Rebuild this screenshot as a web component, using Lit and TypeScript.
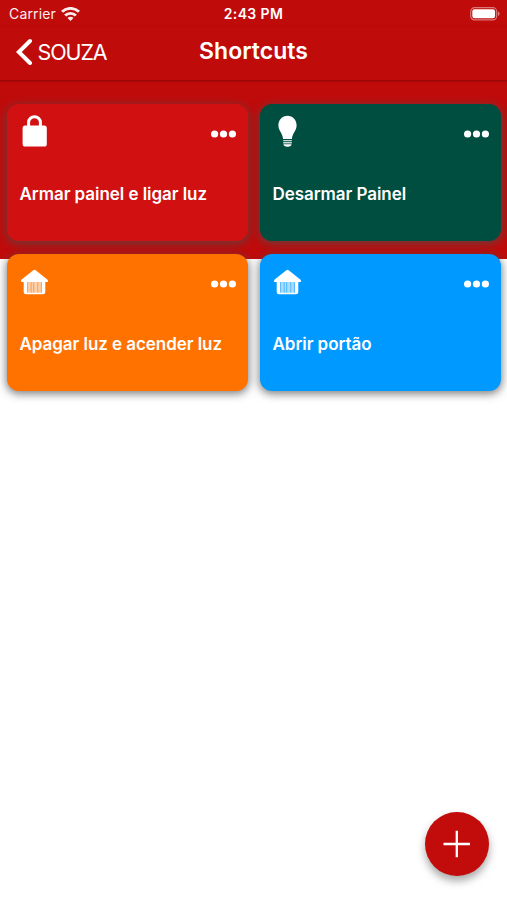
import { LitElement, html, css, svg } from "lit";
import { customElement, property } from "lit/decorators.js";

const lock = svg`
  <path d="M8.600 12V7.300a5.900 5.600 0 0 1 11.800 0V12" fill="none" stroke="#fff" stroke-width="3"/>
  <rect x="2.600" y="10.600" width="24.200" height="20.900" rx="2.600" fill="#fff" stroke="none"/>`;
const bulb = svg`
  <path fill="#fff" d="M14.500 .7C9.400 .7 5.400 4.700 5.400 10.200c0 5.600 4.300 7.800 4.700 13.800h8.800c.4-6 4.700-8.200 4.700-13.800C23.600 4.700 19.600 .7 14.500 .7z"/>
  <path fill="#fff" opacity=".8" d="M10.200 25h8.600v1.300h-8.600zM10.200 27.100h8.600v1.300h-8.600z"/>
  <path fill="#fff" d="M10.400 29.200h8.200c-.2 1.600-1.500 2.500-4.100 2.500s-3.900-.9-4.100-2.500z"/>`;
const garage = svg`
  <path fill="#fff" d="M13.300 4.300q1.200-.9 2.400 0L27.600 13.800q1 1.200 0 2.200H1.400q-1-.9 0-2.200z"/>
  <path fill="#fff" d="M3.700 15h21.600v10.700q0 2.500-2.500 2.500H6.200Q3.700 28.200 3.700 25.700z"/>
  <path fill="var(--tint)" opacity=".33" d="M7.200 16h14.800v10.700H7.200z"/>
  <path stroke="var(--tint)" stroke-width=".9" opacity=".6" d="M7.600 16v10.600M11.200 16v10.600M13.700 16v10.600M17.800 16v10.600M21.400 16v10.600"/>`;
const icons: Record<string, unknown> = { lock, bulb, garage };

@customElement("shortcut-card")
class ShortcutCard extends LitElement {
  @property() icon = "lock";
  @property() label = "";
  static styles = css`
    :host {
      display: block;
      box-sizing: border-box;
      height: 137.500px;
      padding: 12px 12px 0 12.500px;
      border-radius: 12px;
      background: var(--tint);
      box-shadow: 0 2px 9px 1px rgba(75, 75, 75, 0.7);
      color: #fff;
    }
    .top { display: flex; justify-content: space-between; }
    .icon { width: 29px; height: 33px; margin-top: -1px; }
    .icon.garage { margin-top: 0; }
    .dots { width: 25px; height: 8px; margin-top: 14px; fill: #fff; }
    .label {
      margin-top: 35px;
      font-size: 17px;
      line-height: 22px;
      font-weight: 600;
      white-space: nowrap;
      letter-spacing: -0.05px;
    }
    .icon.garage { margin-bottom: -1px; }
  `;
  render() {
    return html`
      <div class="top">
        <svg class="icon ${this.icon}" viewBox="0 0 29 33">${icons[this.icon]}</svg>
        <svg class="dots" viewBox="0 0 25 8">
          <circle cx="3.600" cy="4" r="3.600" /><circle cx="12.500" cy="4" r="3.600" /><circle cx="21.400" cy="4" r="3.600" />
        </svg>
      </div>
      <div class="label">${this.label}</div>
    `;
  }
}

@customElement("app-root")
class AppRoot extends LitElement {
  static styles = css`
    :host {
      display: block;
      position: relative;
      height: 900px;
      overflow: hidden;
      background: linear-gradient(#c00b0b 259px, #fff 259px);
      color: #fff;
      font-family: Inter, "Liberation Sans", sans-serif;
    }
    .status, .nav { display: grid; grid-template-columns: 1fr auto 1fr; align-items: center; }
    .status { height: 27px; padding: 0 7px 0 9px; font-size: 14px; }
    .carrier { display: flex; align-items: center; gap: 5px; opacity: 0.93; letter-spacing: 0.15px; }
    .wifi { width: 19px; height: 14px; }
    .time { font-weight: 600; letter-spacing: 0.4px; margin-right: 2px; }
    .battery { width: 30px; height: 14px; justify-self: end; }
    .nav {
      height: 53px;
      box-sizing: border-box;
      padding: 0 16px 4px;
      box-shadow: 0 1px 2px rgba(90, 0, 0, 0.55);
    }
    .back { display: flex; align-items: center; gap: 4.500px; font-size: 21.500px; letter-spacing: -1.100px; }
    .chevron { width: 17px; height: 27px; }
    .title { font-size: 23px; font-weight: 600; letter-spacing: 0.05px; margin-top: -1px; }
    .grid {
      display: grid;
      grid-template-columns: 241px 241px;
      gap: 12.500px 12px;
      padding: 23.500px 0 0 7px;
    }
    .red { --tint: #d11011; }
    .green { --tint: #004e40; }
    .orange { --tint: #ff7200; }
    .blue { --tint: #0099ff; }
    .fab {
      position: absolute;
      left: 425px;
      top: 812px;
      width: 64px;
      height: 64px;
      padding: 0;
      border: 0;
      border-radius: 50%;
      background: #c20b0b;
      box-shadow: 0 5px 9px rgba(0, 0, 0, 0.35);
    }
    .fab svg { display: block; width: 64px; height: 64px; }
  `;
  render() {
    return html`
      <div class="status">
        <div class="carrier">
          <span>Carrier</span>
          <svg class="wifi" viewBox="0 0 19 14" fill="none" stroke="#fff" stroke-width="2.900">
            <path d="M1 4.800a12.300 12.300 0 0 1 17 0" />
            <path d="M4.100 8.500a7.800 7.800 0 0 1 10.800 0" />
            <path d="M9.500 14L6.500 11a4.200 4.200 0 0 1 6 0z" fill="#fff" stroke="none" />
          </svg>
        </div>
        <div class="time">2:43 PM</div>
        <svg class="battery" viewBox="0 0 30 14">
          <rect x=".7" y=".7" width="26" height="12.200" rx="3.800" fill="none" stroke="#fff" stroke-width="1.200" stroke-opacity=".45" />
          <rect x="2.300" y="2.200" width="22.800" height="9" rx="2.200" fill="#fff" />
          <path d="M28 4.600q1.600.7 1.600 2.200T28 9z" fill="#fff" opacity=".5" />
        </svg>
      </div>
      <div class="nav">
        <div class="back">
          <svg class="chevron" viewBox="0 0 17 27" fill="none" stroke="#fff" stroke-width="4" stroke-linecap="round">
            <path d="M14 3L2.800 14L14 25" />
          </svg>
          <span>SOUZA</span>
        </div>
        <div class="title">Shortcuts</div>
      </div>
      <div class="grid">
        <shortcut-card class="red" icon="lock" label="Armar painel e ligar luz"></shortcut-card>
        <shortcut-card class="green" icon="bulb" label="Desarmar Painel"></shortcut-card>
        <shortcut-card class="orange" icon="garage" label="Apagar luz e acender luz"></shortcut-card>
        <shortcut-card class="blue" icon="garage" label="Abrir portão"></shortcut-card>
      </div>
      <button class="fab" aria-label="+">
        <svg viewBox="0 0 64 64" stroke="#fff" stroke-width="2.300"><path d="M18.500 32h26.500M31.800 18.700v26.500" /></svg>
      </button>
    `;
  }
}
